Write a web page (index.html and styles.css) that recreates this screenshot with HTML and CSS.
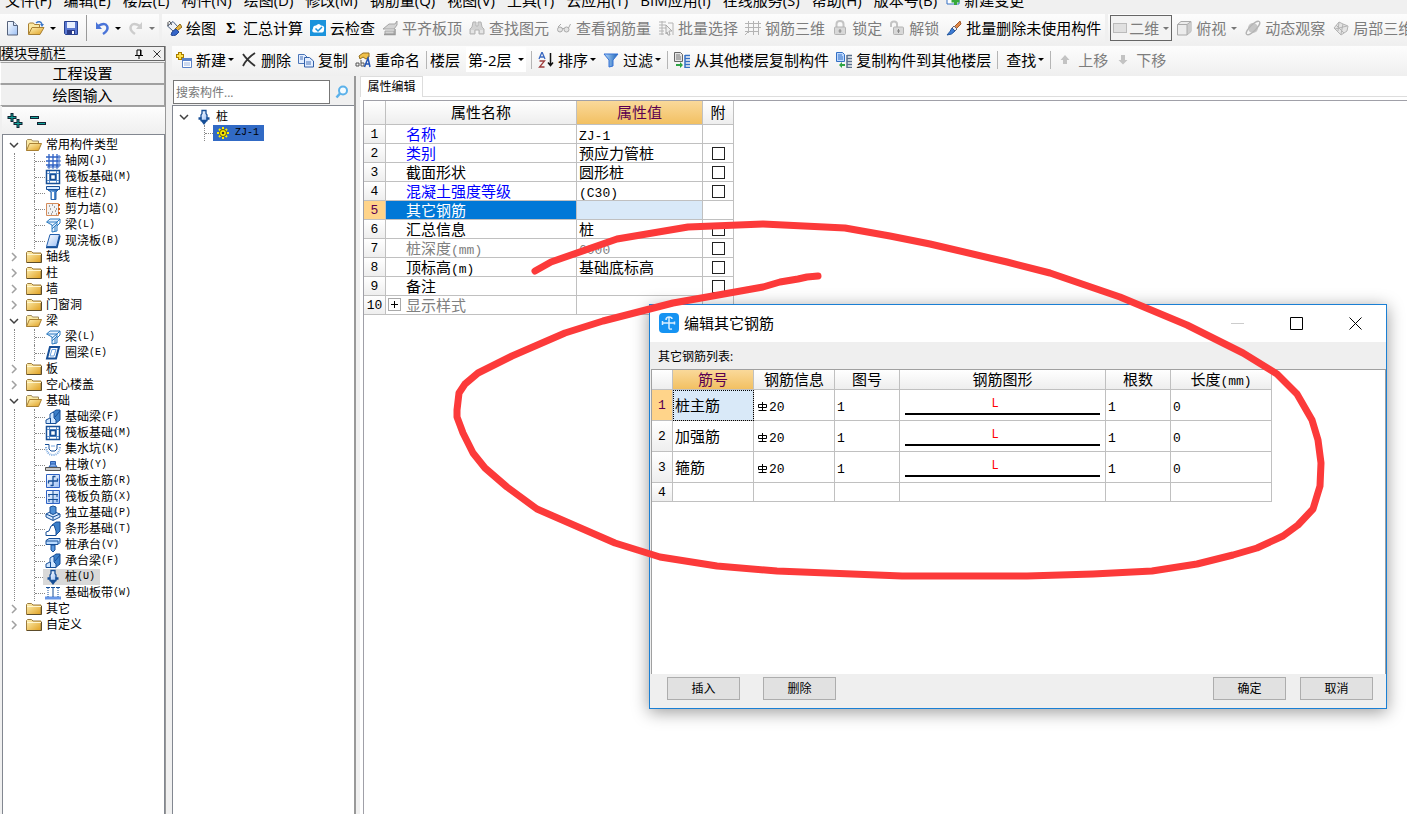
FILE: index.html
```html
<!DOCTYPE html>
<html lang="zh-CN">
<head>
<meta charset="utf-8">
<title>编辑其它钢筋</title>
<link rel="stylesheet" href="styles.css">
</head>
<body>
<svg class="defs" aria-hidden="true">
  <defs>
    <linearGradient id="gold" x1="0" y1="0" x2="1" y2="1"><stop offset="0" stop-color="#fff3b8"/><stop offset="1" stop-color="#e0a020"/></linearGradient>
    <linearGradient id="sky" x1="0" y1="0" x2="1" y2="1"><stop offset="0" stop-color="#fff"/><stop offset="1" stop-color="#9cc0f5"/></linearGradient>
    <linearGradient id="blue" x1="0" y1="0" x2="1" y2="0"><stop offset="0" stop-color="#b8dcff"/><stop offset="1" stop-color="#1b62b5"/></linearGradient>
  </defs>
  <symbol id="open" viewBox="0 0 16 16"><path d="M.5 13.500V3.500l1-1h4l1 1.500h6v2.500" fill="#fbe9a4" stroke="#a08a5c"/><path d="M.5 13.500 3.500 6.500h12l-3 7z" fill="url(#gold)" stroke="#a98032"/></symbol>
  <symbol id="folder" viewBox="0 0 16 16"><path d="M.5 13.500v-10l1-1h4l1.500 1.500h8v9.500z" fill="url(#gold)" stroke="#9b7a3c"/><path d="M1 5.500h14" stroke="#fff6cf"/><path d="M1 13.500h14.500v-8.500" fill="none" stroke="#5c4c2a"/></symbol>
  <symbol id="axis" viewBox="0 0 16 16"><path d="M4 1v13M8 1v13M12 1v13M1 4h12M1 8h12M1 12h12" stroke="#2f62c4" stroke-width="1.300"/><path d="M13 3h2v2h-2zM13 7h2v2h-2zM13 11h2v2h-2zM3 13h2v2H3zM7 13h2v2H7zM11 13h2v2h-2z" fill="none" stroke="#2f62c4"/></symbol>
  <symbol id="raft" viewBox="0 0 16 16"><path d="M1.500 1.500h13v13h-13z" fill="#fff" stroke="#174f97" stroke-width="1.500"/><path d="M4.500 2v12M11.500 2v12M2 4.500h12M2 11.500h12" stroke="#5b8ecb"/><path d="M5.500 5.500h5v5h-5z" fill="#fff" stroke="#174f97" stroke-width="1.500"/></symbol>
  <symbol id="column" viewBox="0 0 16 16"><path d="M1.500 1.500h13v3h-13z" fill="#d7e9ff" stroke="#174f97"/><path d="M3 5h10l-2 2v7.500H6V7z" fill="url(#blue)" stroke="#2361ac"/><path d="M7 7h2v7H7z" fill="#fff"/></symbol>
  <symbol id="wall" viewBox="0 0 16 16"><path d="M1.500 2.500h12v12h-12z" fill="#f3f3f3" stroke="#d48b5a"/><path d="M3 12h1M5 8h1M7 11h1M9 6h1M10 10h1M6 13h1M11 13h1M4 5h1M7 4h1M11 8h1" stroke="#555"/><path d="M13 4h2M13 8h2M13 12h2" stroke="#cc5d18" stroke-width="2"/></symbol>
  <symbol id="beam" viewBox="0 0 16 16"><path d="M1.500 5 5 2h10l-3 3v9l-5 1V8z" fill="#e6f2ff" stroke="#2d7bc0"/><path d="M2 5h10l3-3v4l-3 3M7 9l5-4M7 12l5-5M10 14v-5" fill="none" stroke="#2d7bc0"/></symbol>
  <symbol id="slab" viewBox="0 0 16 16"><path d="M1.500 13.500 5 1.500h9.500l-3 12z" fill="url(#sky)" stroke="#2460ad"/><path d="M1 14.500h11l3-12" fill="none" stroke="#174f97" stroke-width="1.500"/></symbol>
  <symbol id="ring" viewBox="0 0 16 16"><path d="M2 13.500 5 2h9l-3 11.500z" fill="#fff" stroke="#174f97" stroke-width="2"/><path d="M5 11 7 4.500h4L9 11z" fill="#fff" stroke="#6aa0e0"/></symbol>
  <symbol id="fbeam" viewBox="0 0 16 16"><path d="M7 4 11 1h4v10l-5 4z" fill="#3b7fc9" stroke="#174f97"/><path d="M1 14.500V11l4-2V5l3-2 1 1v5l2 2v3.500z" fill="#cfe6ff" stroke="#174f97"/><path d="M5.500 9v5M10 8l5-6" stroke="#174f97"/></symbol>
  <symbol id="pit" viewBox="0 0 16 16"><path d="M0 3.500h4V8l2 2h4l2-2V3.500h4" fill="none" stroke="#174f97"/><path d="M1 6q1 8 7 8t7-8" fill="none" stroke="#78a8e0" stroke-width="2" stroke-dasharray="1 1"/><path d="M6 5h4" stroke="#78a8e0"/></symbol>
  <symbol id="pier" viewBox="0 0 16 16"><path d="M5.500 4.500h5v3h-5z" fill="#5f95e2" stroke="#2c5fae"/><path d="M4 10l2-3h4l2 3z" fill="#86b2ee" stroke="#2c5fae"/><path d="M.5 10.500h15v3H.5z" fill="#c9c9c9" stroke="#555"/></symbol>
  <symbol id="mainbar" viewBox="0 0 16 16"><path d="M1.500 1.500h13v13h-13z" fill="url(#sky)" stroke="#2f62c4"/><path d="M8 3v10M8 3.500h2.500M5.500 12.500H8M3 8h10M3.500 8v2.500M12.500 5.500V8" stroke="#174f97" stroke-width="1.300"/></symbol>
  <symbol id="negbar" viewBox="0 0 16 16"><path d="M1.500 1.500h13v13h-13z" fill="url(#sky)" stroke="#2f62c4"/><path d="M8 2v12M3 5.500h10M3 10.500h10M4 5v3M12 5v3M4 10v3M12 10v3" stroke="#174f97"/></symbol>
  <symbol id="isolated" viewBox="0 0 16 16"><path d="M1 9l6-3 8 3v3l-7 3.500L1 12z" fill="#d9ebff" stroke="#174f97"/><path d="M1 9l7 3 7-3M8 12v3" fill="none" stroke="#174f97"/><path d="M5 8V2l3-1 3 1v6L8 9.500z" fill="#4f8fd4" stroke="#174f97"/></symbol>
  <symbol id="strip" viewBox="0 0 16 16"><path d="M7 4l4-3h4v9l-4 4z" fill="#3b7fc9" stroke="#174f97"/><path d="M1 14.500V11l3-1 2-5 3-1 2 6v4.500z" fill="#fff" stroke="#174f97"/></symbol>
  <symbol id="cap" viewBox="0 0 16 16"><path d="M1 3.500 4 1.500h11v4l-2 2H1z" fill="#bcdcff" stroke="#174f97"/><path d="M1 4h12v3" fill="none" stroke="#174f97"/><path d="M6 8h4v5l-2 2-2-2z" fill="#5f9be0" stroke="#174f97"/></symbol>
  <symbol id="pile" viewBox="0 0 16 16"><path d="M6 1.500h4v3l1 1.500v5.500H5V6l1-1.500z" fill="url(#sky)" stroke="#174f97" stroke-width="1.300"/><path d="M2.500 9.500h3M10.500 9.500h3" stroke="#174f97" stroke-width="2.500"/><path d="M5 12h6l-3 4z" fill="#174f97"/></symbol>
  <symbol id="band" viewBox="0 0 16 16"><path d="M0 13h16" stroke="#6797e8" stroke-width="3"/><path d="M1 2.500h4M6 2.500h4M11 2.500h4M8 2.500V12" stroke="#174f97"/><path d="M3 3v9M13 3v9" stroke="#174f97" stroke-dasharray="1 1"/></symbol>
  <symbol id="gear" viewBox="0 0 16 16"><path d="M8 2v12M2 8h12M4 4l8 8M12 4l-8 8" stroke="#ffee00" stroke-width="2"/><circle cx="8" cy="8" r="3.500" fill="#ffee00" stroke="#5f5a00"/><circle cx="8" cy="8" r="1.300" fill="#333"/></symbol>
  <symbol id="new" viewBox="0 0 16 16"><path d="M3.500 1.500h6l4 4v9.500h-10z" fill="url(#sky)" stroke="#56637c"/><path d="M9.500 1.500v4h4" fill="#dce8fa" stroke="#56637c"/></symbol>
  <symbol id="openfile" viewBox="0 0 18 16"><path d="M1.500 14V4l1-1h4l1 1.500h5V7" fill="#fbe9a4" stroke="#a98032"/><path d="M1.500 14.500 5 7.500h12l-4 7z" fill="url(#gold)" stroke="#a98032"/><path d="M9 3q4-3 6 1" fill="none" stroke="#3c77c8" stroke-width="1.500"/><path d="M13 4h4l-2 3z" fill="#3c77c8"/></symbol>
  <symbol id="save" viewBox="0 0 16 16"><path d="M1.500 1.500h13v13h-12l-1-1z" fill="#5a78d2" stroke="#27418f"/><path d="M4 2h8v6H4z" fill="#e8f0ff"/><path d="M4 10h8v4H4z" fill="#2c3c88"/><path d="M9 11h2v3H9z" fill="#fff"/></symbol>
  <symbol id="undo" viewBox="0 0 16 16"><path d="M4 6q7-4 9 0t-4 8" fill="none" stroke="#4a74d8" stroke-width="2.500"/><path d="M2 2v7h6z" fill="#4a74d8"/></symbol>
  <symbol id="redo" viewBox="0 0 16 16"><path d="M12 6Q5 2 3 6t4 8" fill="none" stroke="#cdcdcd" stroke-width="2.500"/><path d="M14 2v7H8z" fill="#cdcdcd"/></symbol>
  <symbol id="paint" viewBox="0 0 16 16"><path d="M1.500 6 7 1.500 12 7l-5 4z" fill="#eef1f6" stroke="#4a5f80"/><path d="M2 6V2.500q2-3 3.500 2.500" fill="none" stroke="#444"/><path d="M14 4l2 3-5 4-2-2z" fill="#e7b23c" stroke="#8a6a20"/><path d="M6 12l4-3 3 3-3 3q-3 1.500-5 0z" fill="#3565c8" stroke="#274a94"/></symbol>
  <symbol id="cloud" viewBox="0 0 16 16"><path d="M0 0h16v16H0z" fill="#1b93dc"/><path d="M4 12.500q-3-1-1-4 0-3 3-3 3-3 5 0 4 0 3 4 0 3-2 3z" fill="#fff"/><path d="M5.500 8.500 8 11l4-4" fill="none" stroke="#1b93dc" stroke-width="1.500"/></symbol>
  <symbol id="align" viewBox="0 0 16 16"><path d="M1 9l6-5h6l2-3v4l-3 4H6zM3 11h9v3H3z" fill="#d3d3d3" stroke="#a5a5a5"/><path d="M2 14.500h11V9" fill="none" stroke="#999" stroke-width="1.500"/></symbol>
  <symbol id="binoc" viewBox="0 0 16 16"><path d="M4 2h3v4h2V2h3l1 5 2 2v5h-5v-4H6v4H1V9l2-2z" fill="#d2d2d2" stroke="#b4b4b4"/><path d="M2 10h3v3H2zM11 10h3v3h-3z" fill="#e5e5e5"/></symbol>
  <symbol id="glasses" viewBox="0 0 16 16"><circle cx="4" cy="9.500" r="2.500" fill="#e4e4e4" stroke="#aaa"/><circle cx="10.500" cy="9.500" r="2.500" fill="#e4e4e4" stroke="#aaa"/><path d="M6 8.500h2M2 7l3-3M12.500 8l2-4" stroke="#aaa"/></symbol>
  <symbol id="select" viewBox="0 0 16 16"><path d="M1 2h7M1 5h7M1 8h7M1 11h5M1 14h5M10 3h5v12M4 1v14" fill="none" stroke="#b4b4b4"/><path d="M8 5l6 6h-3l1 4h-2l-1-3-1 2z" fill="#eee" stroke="#aaa"/></symbol>
  <symbol id="grid" viewBox="0 0 16 16"><path d="M3.500 1v12M8.500 1v14M13.500 1v14M0 3.500h16M0 7.500h16M0 11.500h14M0 15l4-4" stroke="#b4b4b4"/></symbol>
  <symbol id="lock" viewBox="0 0 16 16"><path d="M4.500 7V4q0-3 3.500-3t3.500 3v3" fill="none" stroke="#c4c4c4" stroke-width="2"/><rect x="2.500" y="7" width="11" height="7.500" rx="1" fill="#d8d8d8" stroke="#b4b4b4"/><path d="M8 9v4M6.500 11h3" stroke="#888"/></symbol>
  <symbol id="unlock" viewBox="0 0 16 16"><path d="M2 7V4q0-2.500 3-2.500T8 4v3" fill="none" stroke="#c4c4c4" stroke-width="2"/><rect x="4.500" y="7" width="10" height="7.500" rx="1" fill="#d8d8d8" stroke="#b4b4b4"/><path d="M9.500 9v4M8 11h3" stroke="#888"/></symbol>
  <symbol id="brush" viewBox="0 0 16 16"><path d="M14 1 8 7l2 2 5-5z" fill="#e08a4a" stroke="#a3592a"/><path d="M8 6l3 3-2 2-3-3z" fill="#e9edf5" stroke="#667"/><path d="M6 8l3 3q-3 4-8 4 3-3 5-7z" fill="#3d7cd6" stroke="#24589e"/></symbol>
  <symbol id="cube" viewBox="0 0 16 16"><path d="M1.500 4.500 5 1.500h10v10l-4 3.500H1.500z" fill="#ececec" stroke="#aaa"/><path d="M11 5l4-3v9l-4 4z" fill="#ccc"/><path d="M1.500 4.500H11V15M11 4.500l4-3" fill="none" stroke="#aaa"/></symbol>
  <symbol id="orbit" viewBox="0 0 16 16"><circle cx="8" cy="8" r="5" fill="#c6c6c6"/><ellipse cx="8" cy="8" rx="9" ry="3" transform="rotate(-45 8 8)" fill="none" stroke="#b4b4b4" stroke-width="1.300"/></symbol>
  <symbol id="local" viewBox="0 0 16 16"><path d="M1 8l5-6 4 2 5 2-1 5-6 4z" fill="#e4e4e4" stroke="#b4b4b4"/><path d="M3 5l8 8M6 2l-1 9M10 4 8 14M2 9l12-3" stroke="#b4b4b4"/></symbol>
  <symbol id="create" viewBox="0 0 16 16"><path d="M4 0v8M0 4h8" stroke="#a87c00" stroke-width="4"/><path d="M4 1v6M1 4h6" stroke="#ffe14a" stroke-width="2"/><path d="M6.500 6.500h9v9h-9z" fill="#fff" stroke="#5a82c8"/><path d="M6 7.500h10" stroke="#5a82c8" stroke-width="3"/><path d="M8 11h6M8 13h6" stroke="#9ab4e0"/></symbol>
  <symbol id="cross" viewBox="0 0 16 16"><path d="M2 2q4 6 12 12M14 1Q6 6 2 14" fill="none" stroke="#333" stroke-width="1.800"/></symbol>
  <symbol id="copy" viewBox="0 0 16 16"><path d="M.5 2.500h6l3 3v6h-9z" fill="#e3eeff" stroke="#4a75b8"/><path d="M6.500 5.500h5l4 3.500v6h-9z" fill="#e3eeff" stroke="#315fa8"/><path d="M2 5h3M2 7h3M8 10h5M8 12h5" stroke="#4a75b8"/></symbol>
  <symbol id="rename" viewBox="0 0 16 16"><path d="M4 4l4-3h6v4l-3 2-3-2-3 2z" fill="#f0c14a" stroke="#96701c"/><path d="M1 14v-3h3v3H1M6 8v6h3v-3H6" fill="none" stroke="#555"/><path d="M9.500 15 13 6l2 9M10.500 12h4" fill="none" stroke="#2455b4" stroke-width="1.500"/></symbol>
  <symbol id="sort" viewBox="0 0 16 16"><path d="M1 7 4 0l3 7M2 5h4" fill="none" stroke="#3968c0" stroke-width="1.300"/><path d="M1.500 9h5l-5 6h5" fill="none" stroke="#9c3c3c" stroke-width="1.300"/><path d="M12.500 1v12M10 10.500l2.500 3 2.500-3" fill="none" stroke="#111" stroke-width="1.500"/></symbol>
  <symbol id="filter" viewBox="0 0 16 16"><path d="M1 2h14l-5 6v6l-4 1V8z" fill="url(#blue)" stroke="#3470d4"/></symbol>
  <symbol id="from" viewBox="0 0 16 16"><path d="M.5.500h6l2 2v7h-8z" fill="#e5e5e5" stroke="#666"/><path d="M2 3h4M2 5h5M2 7h5" stroke="#777"/><path d="M11 3.500h5M11 6.500h5M11 9.500h5M11 12.500h5M11 15.500h5M11 3v13" stroke="#3470c4" stroke-width="1.500"/><path d="M2 12h4v-2l3 3-3 3v-2H2z" fill="#2da545"/></symbol>
  <symbol id="to" viewBox="0 0 16 16"><path d="M.5.500h6l2 2v7h-8z" fill="#bcd8ff" stroke="#3470c4"/><path d="M2 3h4M2 5h5M2 7h5" stroke="#3470c4"/><path d="M11 3.500h5M11 6.500h5M11 9.500h5M11 12.500h5M11 15.500h5M11 3v13" stroke="#5a6f8c" stroke-width="1.500"/><path d="M9 12H6v-2l-3 3 3 3v-2h3z" fill="#2da545"/></symbol>
  <symbol id="up" viewBox="0 0 10 10"><path d="M5 0l4.500 5H7v4H3V5H.5z" fill="#c3c3c3"/></symbol>
  <symbol id="down" viewBox="0 0 10 10"><path d="M5 9.500 9.500 5H7V0H3v5H.5z" fill="#c3c3c3"/></symbol>
  <symbol id="chevdown" viewBox="0 0 10 10"><path d="M1 3l4 4 4-4" fill="none" stroke="#404040" stroke-width="1.500"/></symbol>
  <symbol id="chevright" viewBox="0 0 10 10"><path d="M3 1l4 4-4 4" fill="none" stroke="#a0a0a0" stroke-width="1.500"/></symbol>
  <symbol id="rebar" viewBox="0 0 11 11"><path d="M5.500 1v9M1.500 9.500h8M1.500 3.500h8v3h-8z" fill="none" stroke="#000"/></symbol>
</svg>

<nav class="menubar">
  <a href="#">文件(F)</a><a href="#">编辑(E)</a><a href="#">楼层(L)</a><a href="#">构件(N)</a><a href="#">绘图(D)</a><a href="#">修改(M)</a><a href="#">钢筋量(Q)</a><a href="#">视图(V)</a><a href="#">工具(T)</a><a href="#">云应用(T)</a><a href="#">BIM应用(I)</a><a href="#">在线服务(S)</a><a href="#">帮助(H)</a><a href="#">版本号(B)</a>
  <a href="#" class="change"><svg class="i14" viewBox="0 0 14 14"><path d="M1 0h12v11H1z" fill="#fff" stroke="#3470c4"/><path d="M9.500 4v8M5.500 8h8" stroke="#37a93b" stroke-width="3"/></svg>新建变更</a>
</nav>

<div class="toprow">
  <div class="band quick">
    <button aria-label="新建文件"><svg><use href="#new"/></svg></button>
    <button aria-label="打开"><svg class="wide"><use href="#openfile"/></svg><i class="caret"></i></button>
    <button aria-label="保存"><svg><use href="#save"/></svg></button>
    <span class="sep"></span>
    <button aria-label="撤销"><svg><use href="#undo"/></svg><i class="caret"></i></button>
    <button aria-label="恢复" disabled><svg><use href="#redo"/></svg><i class="caret"></i></button>
  </div>
  <div class="band main">
    <button><svg><use href="#paint"/></svg>绘图</button>
    <button><span class="sigma">Σ</span>汇总计算</button>
    <button><svg><use href="#cloud"/></svg>云检查</button>
    <button disabled><svg><use href="#align"/></svg>平齐板顶</button>
    <button disabled><svg><use href="#binoc"/></svg>查找图元</button>
    <button disabled><svg><use href="#glasses"/></svg>查看钢筋量</button>
    <button disabled><svg><use href="#select"/></svg>批量选择</button>
    <button disabled><svg><use href="#grid"/></svg>钢筋三维</button>
    <button disabled><svg><use href="#lock"/></svg>锁定</button>
    <button disabled><svg><use href="#unlock"/></svg>解锁</button>
    <button><svg><use href="#brush"/></svg>批量删除未使用构件</button>
  </div>
  <div class="band view">
    <label class="dim"><span class="swatch"></span><select aria-label="视图维度"><option>二维</option></select><i class="caret"></i></label>
    <button disabled><svg><use href="#cube"/></svg>俯视<i class="caret"></i></button>
    <button disabled><svg><use href="#orbit"/></svg>动态观察</button>
    <button disabled><svg><use href="#local"/></svg>局部三维</button>
  </div>
</div>

<div class="workspace">
  <aside class="sidebar">
    <header class="navhead"><span>模块导航栏</span>
      <button aria-label="固定"><svg viewBox="0 0 10 10"><path d="M3 1h4v5M3 6V1M1 6.500h8M5 7v3" fill="none" stroke="#000"/><path d="M6.500 1v5" stroke="#000"/></svg></button>
      <button aria-label="关闭"><svg viewBox="0 0 10 10"><path d="M1.500 1.500l7 7M8.500 1.500l-7 7" stroke="#333"/></svg></button>
    </header>
    <button class="navbtn">工程设置</button>
    <button class="navbtn">绘图输入</button>
    <div class="navtools">
      <button aria-label="全部展开"><svg viewBox="0 0 16 16"><path d="M5 0v9M.5 4.500h9M11 6v9M6.500 10.500h9" stroke="#123" stroke-width="3"/><path d="M5 1v7M1.500 4.500h7M11 7v7M7.500 10.500h7" stroke="#12a59a"/></svg></button>
      <button aria-label="全部折叠"><svg viewBox="0 0 16 16"><path d="M0 4.500h9M7 10.500h9" stroke="#123" stroke-width="3"/><path d="M1 4.500h7M8 10.500h7" stroke="#12a59a"/></svg></button>
    </div>
    <ul class="tree">
      <li><div class="node"><svg class="chev"><use href="#chevdown"/></svg><svg><use href="#open"/></svg>常用构件类型</div>
        <ul>
          <li><svg><use href="#axis"/></svg>轴网<kbd>(J)</kbd></li>
          <li><svg><use href="#raft"/></svg>筏板基础<kbd>(M)</kbd></li>
          <li><svg><use href="#column"/></svg>框柱<kbd>(Z)</kbd></li>
          <li><svg><use href="#wall"/></svg>剪力墙<kbd>(Q)</kbd></li>
          <li><svg><use href="#beam"/></svg>梁<kbd>(L)</kbd></li>
          <li><svg><use href="#slab"/></svg>现浇板<kbd>(B)</kbd></li>
        </ul></li>
      <li><div class="node"><svg class="chev"><use href="#chevright"/></svg><svg><use href="#folder"/></svg>轴线</div></li>
      <li><div class="node"><svg class="chev"><use href="#chevright"/></svg><svg><use href="#folder"/></svg>柱</div></li>
      <li><div class="node"><svg class="chev"><use href="#chevright"/></svg><svg><use href="#folder"/></svg>墙</div></li>
      <li><div class="node"><svg class="chev"><use href="#chevright"/></svg><svg><use href="#folder"/></svg>门窗洞</div></li>
      <li><div class="node"><svg class="chev"><use href="#chevdown"/></svg><svg><use href="#open"/></svg>梁</div>
        <ul>
          <li><svg><use href="#beam"/></svg>梁<kbd>(L)</kbd></li>
          <li><svg><use href="#ring"/></svg>圈梁<kbd>(E)</kbd></li>
        </ul></li>
      <li><div class="node"><svg class="chev"><use href="#chevright"/></svg><svg><use href="#folder"/></svg>板</div></li>
      <li><div class="node"><svg class="chev"><use href="#chevright"/></svg><svg><use href="#folder"/></svg>空心楼盖</div></li>
      <li><div class="node"><svg class="chev"><use href="#chevdown"/></svg><svg><use href="#open"/></svg>基础</div>
        <ul>
          <li><svg><use href="#fbeam"/></svg>基础梁<kbd>(F)</kbd></li>
          <li><svg><use href="#raft"/></svg>筏板基础<kbd>(M)</kbd></li>
          <li><svg><use href="#pit"/></svg>集水坑<kbd>(K)</kbd></li>
          <li><svg><use href="#pier"/></svg>柱墩<kbd>(Y)</kbd></li>
          <li><svg><use href="#mainbar"/></svg>筏板主筋<kbd>(R)</kbd></li>
          <li><svg><use href="#negbar"/></svg>筏板负筋<kbd>(X)</kbd></li>
          <li><svg><use href="#isolated"/></svg>独立基础<kbd>(P)</kbd></li>
          <li><svg><use href="#strip"/></svg>条形基础<kbd>(T)</kbd></li>
          <li><svg><use href="#cap"/></svg>桩承台<kbd>(V)</kbd></li>
          <li><svg><use href="#fbeam"/></svg>承台梁<kbd>(F)</kbd></li>
          <li><span class="picked"><svg><use href="#pile"/></svg>桩<kbd>(U)</kbd></span></li>
          <li><svg><use href="#band"/></svg>基础板带<kbd>(W)</kbd></li>
        </ul></li>
      <li><div class="node"><svg class="chev"><use href="#chevright"/></svg><svg><use href="#folder"/></svg>其它</div></li>
      <li><div class="node"><svg class="chev"><use href="#chevright"/></svg><svg><use href="#folder"/></svg>自定义</div></li>
    </ul>
  </aside>

  <main class="content">
    <div class="band sub">
      <button><svg><use href="#create"/></svg>新建<i class="caret"></i></button>
      <button><svg><use href="#cross"/></svg>删除</button>
      <button><svg><use href="#copy"/></svg>复制</button>
      <button><svg><use href="#rename"/></svg>重命名</button>
      <span class="sep"></span>
      <label class="floor">楼层<span class="pick"><select><option>第-2层</option></select><i class="caret"></i></span></label>
      <span class="sep"></span>
      <button><svg><use href="#sort"/></svg>排序<i class="caret"></i></button>
      <button><svg><use href="#filter"/></svg>过滤<i class="caret"></i></button>
      <span class="sep"></span>
      <button><svg><use href="#from"/></svg>从其他楼层复制构件</button>
      <button><svg><use href="#to"/></svg>复制构件到其他楼层</button>
      <span class="sep roomy"></span>
      <button>查找<i class="caret"></i></button>
      <span class="sep"></span>
      <button disabled class="move"><svg class="arrow"><use href="#up"/></svg>上移</button>
      <button disabled class="move"><svg class="arrow"><use href="#down"/></svg>下移</button>
    </div>
    <div class="panels">
      <section class="parts">
        <div class="search"><input type="text" placeholder="搜索构件..." aria-label="搜索构件"><button aria-label="搜索"><svg viewBox="0 0 14 14"><circle cx="8" cy="5.500" r="4" fill="#f4fbff" stroke="#5bb1ea" stroke-width="2"/><path d="M5 8.500 1.500 12.500" stroke="#5bb1ea" stroke-width="2.500"/></svg></button></div>
        <ul class="tree small">
          <li><div class="node"><svg class="chev"><use href="#chevdown"/></svg><svg><use href="#pile"/></svg>桩</div>
            <ul><li><span class="chosen"><svg><use href="#gear"/></svg><kbd>ZJ-1</kbd></span></li></ul></li>
        </ul>
      </section>
      <section class="editor">
        <div class="tabs"><button class="tab">属性编辑</button></div>
        <div class="sheet">
          <table class="grid props">
            <colgroup><col class="c22"><col class="c191"><col class="c126"><col class="c31"></colgroup>
            <thead><tr><th></th><th>属性名称</th><th class="hot">属性值</th><th>附</th></tr></thead>
            <tbody>
              <tr><th>1</th><td class="key">名称</td><td><b>ZJ-1</b></td><td></td></tr>
              <tr><th>2</th><td class="key">类别</td><td>预应力管桩</td><td class="tick"><input type="checkbox" aria-label="附 类别"></td></tr>
              <tr><th>3</th><td>截面形状</td><td>圆形桩</td><td class="tick"><input type="checkbox" aria-label="附 截面形状"></td></tr>
              <tr><th>4</th><td class="key">混凝土强度等级</td><td><b>(C30)</b></td><td class="tick"><input type="checkbox" aria-label="附 混凝土强度等级"></td></tr>
              <tr class="current"><th class="on">5</th><td>其它钢筋</td><td></td><td></td></tr>
              <tr><th>6</th><td>汇总信息</td><td>桩</td><td class="tick"><input type="checkbox" aria-label="附 汇总信息"></td></tr>
              <tr class="dimmed"><th>7</th><td>桩深度<b>(mm)</b></td><td><b>6000</b></td><td class="tick"><input type="checkbox" aria-label="附 桩深度"></td></tr>
              <tr><th>8</th><td>顶标高<b>(m)</b></td><td>基础底标高</td><td class="tick"><input type="checkbox" aria-label="附 顶标高"></td></tr>
              <tr><th>9</th><td>备注</td><td></td><td class="tick"><input type="checkbox" aria-label="附 备注"></td></tr>
              <tr class="dimmed"><th>10</th><td class="group"><div><button aria-label="展开"><svg viewBox="0 0 11 11"><path d="M5.500 2v7M2 5.500h7" stroke="#000"/></svg></button>显示样式</div></td><td></td><td></td></tr>
            </tbody>
          </table>
        </div>
      </section>
    </div>
  </main>
</div>

<div class="dialog" role="dialog" aria-label="编辑其它钢筋">
  <header class="title">
    <svg class="logo" viewBox="0 0 20 20"><rect width="20" height="20" rx="4" fill="#1593f2"/><path d="M7 7q0-3 3-3t3 2M10 4v11q0 1.500 3 1M3 10h13M3.500 8v4M15.500 8.500v3" fill="none" stroke="#d9efff" stroke-width="1.500"/></svg>
    <span>编辑其它钢筋</span>
    <div class="winbtns">
      <button aria-label="最小化" disabled><svg viewBox="0 0 13 13"><path d="M0 6.500h13" stroke="#ccc"/></svg></button>
      <button aria-label="最大化"><svg viewBox="0 0 13 13"><path d="M.5.500h12v12H.5z" fill="none" stroke="#000"/></svg></button>
      <button aria-label="关闭"><svg viewBox="0 0 13 13"><path d="M.5.500l12 12M12.500.500l-12 12" stroke="#000"/></svg></button>
    </div>
  </header>
  <p class="caption">其它钢筋列表:</p>
  <div class="listing">
    <table class="grid bars">
      <colgroup><col class="c21"><col class="c81"><col class="c81"><col class="c65"><col class="c206"><col class="c65"><col class="c101"></colgroup>
      <thead><tr><th></th><th class="hot">筋号</th><th>钢筋信息</th><th>图号</th><th>钢筋图形</th><th>根数</th><th>长度<b>(mm)</b></th></tr></thead>
      <tbody>
        <tr><th class="on">1</th><td class="focus">桩主筋</td><td><svg class="rebar"><use href="#rebar"/></svg><b>20</b></td><td><b>1</b></td><td class="shape"><span>L</span></td><td><b>1</b></td><td><b>0</b></td></tr>
        <tr><th>2</th><td>加强筋</td><td><svg class="rebar"><use href="#rebar"/></svg><b>20</b></td><td><b>1</b></td><td class="shape"><span>L</span></td><td><b>1</b></td><td><b>0</b></td></tr>
        <tr><th>3</th><td>箍筋</td><td><svg class="rebar"><use href="#rebar"/></svg><b>20</b></td><td><b>1</b></td><td class="shape"><span>L</span></td><td><b>1</b></td><td><b>0</b></td></tr>
        <tr class="blank"><th>4</th><td></td><td></td><td></td><td></td><td></td><td></td></tr>
      </tbody>
    </table>
  </div>
  <footer class="actions"><button>插入</button><button>删除</button><span class="fill"></span><button>确定</button><button>取消</button></footer>
</div>

<svg class="markup" width="1407" height="814" viewBox="0 0 1407 814" aria-hidden="true"><polyline points="535,271 551,262 617,239 688,227 763,224 845,228 890,236 930,244 1007,262 1050,273 1120,297 1187,325 1243,353 1277,374 1297,394 1312,420 1318,440 1321,463 1320,486 1313,509 1298,525 1283,536 1257,548 1233,555 1197,564 1152,571 1093,574 1027,576 902,576 777,571 717,566 660,557 615,543 537,509 507,487 485,468 473,453 463,433 457,417 457,410 459,393 465,384 478,373 512,356 565,333 603,321 673,303 707,297 763,287 780,282 798,279 807,277 818,276"/></svg>
</body>
</html>
```
FILE: styles.css
```css
* { box-sizing: border-box; }
body {
  margin: 0;
  height: 100vh;
  display: flex;
  flex-direction: column;
  position: relative;
  overflow: hidden;
  background: #f0f0f0;
  color: #000;
  font: 15px/20px "Open Sans", "Noto Sans CJK SC", sans-serif;
}
button, select, input { font: inherit; color: inherit; }
button { background: none; border: 0; padding: 0; }
svg { display: block; flex: none; width: 16px; height: 16px; }
ul { list-style: none; margin: 0; padding: 0; }
.defs { position: absolute; width: 0; height: 0; }
kbd, b { font-family: "Liberation Mono", monospace; font-weight: 400; line-height: 0; }

/* menu and toolbars */
.menubar {
  height: 14px;
  flex: none;
  display: flex;
  align-items: flex-end;
  gap: 12px;
  padding: 0 5px 4px;
  overflow: hidden;
  white-space: nowrap;
}
.menubar a { color: #000; text-decoration: none; flex: none; }
.menubar .change { display: flex; align-items: center; gap: 4px; margin-left: -3px; }
.menubar .i14 { width: 14px; height: 14px; }
.toprow { flex: none; display: flex; gap: 3px; height: 31px; overflow: hidden; }
.band {
  display: flex;
  align-items: center;
  gap: 7px;
  flex: none;
  height: 31px;
  padding-bottom: 3px;
  white-space: nowrap;
  background: linear-gradient(#fdfdfd, #efefef);
}
.band button { display: flex; align-items: center; gap: 4px; }
.band button:disabled { color: #7d7d7d; }
.quick { width: 159px; padding-left: 4px; }
.quick .wide { width: 18px; }
.main { padding-left: 4px; padding-right: 4px; }
.view { flex: 1 0 auto; padding-left: 2px; gap: 4px; }
.view button { margin-right: 4px; }
.sigma { width: 16px; text-align: center; font: bold 15px/20px "Liberation Serif", serif; }
.caret { border: 3px solid transparent; border-top-color: #000; border-bottom: 0; margin-left: 1px; }
:disabled .caret, .dim .caret { border-top-color: #777; }
.sep { width: 1px; height: 18px; background: #b5b5b5; }
.quick .sep { height: 26px; background: #999; }
.dim { display: flex; align-items: center; width: 62px; height: 26px; border: 1px solid #666; background: #f3f3f3; color: #7d7d7d; padding-left: 2px; }
.swatch { width: 14px; height: 10px; border: 1px solid #bbb; background: #e0e0e0; }
select { appearance: none; border: 0; background: none; padding: 0; height: 20px; }
.dim select { width: 35px; padding-left: 2px; }
.sub { padding-left: 4px; height: 30px; }
.sub .caret { margin-left: -2px; }
.sub .sep { margin: 0 -1px; }
.sub .sep.roomy { margin-right: 1px; }
.floor { display: flex; align-items: center; gap: 6px; margin-left: -3px; margin-right: -1px; }
.pick { display: flex; align-items: center; width: 60px; height: 25px; background: #fff; padding-left: 2px; }
.pick select { width: 52px; }
.move { margin-left: 3px; }
.move .arrow { width: 10px; height: 10px; margin-right: 4px; }

/* module navigator */
.workspace { flex: 1; min-height: 0; display: flex; gap: 6px; padding-top: 1px; }
.sidebar { flex: none; width: 166px; display: flex; flex-direction: column; border-right: 1px solid #999; }
.navhead { display: flex; align-items: center; gap: 8px; height: 15px; border: 1px solid #666; font-size: 13px; line-height: 13px; padding-right: 2px; }
.navhead span { flex: 1; }
.navhead svg { width: 10px; height: 10px; }
.navbtn { height: 22px; line-height: 20px; border: 1px solid #a0a0a0; border-left-color: #fff; margin-top: 1px; }
.navbtn + .navbtn { margin-top: 0; }
.navtools { display: flex; gap: 7px; height: 28px; align-items: center; padding-left: 5px; margin-left: 2px; background: linear-gradient(#fdfdfd, #efefef); border-top: 1px solid #a0a0a0; }
.tree { background: #fff; font-size: 12px; line-height: 16px; }
.sidebar .tree { flex: 1; overflow: hidden; margin-left: 2px; border: 1px solid #828790; border-bottom: 0; padding-top: 2px; }
.tree kbd { font-size: 10px; }
.tree .node { display: flex; align-items: center; gap: 4px; height: 16px; padding-left: 6px; }
.tree .chev { width: 10px; height: 10px; margin-right: 3px; }
.tree li ul { margin-left: 11px; padding-left: 19px; border-left: 1px dotted #888; }
.tree li li { display: flex; align-items: center; height: 16px; border-left: 1px dotted #888; }
.tree li li::before { content: ""; width: 10px; border-top: 1px dotted #888; }
.tree li li svg { margin-right: 4px; }
.picked { display: flex; align-items: center; background: #d9d9d9; margin-left: -2px; padding: 0 5px 0 2px; }

/* component list */
.content { flex: 1; min-width: 0; display: flex; flex-direction: column; }
.panels { flex: 1; min-height: 0; display: flex; gap: 4px; }
.parts { flex: none; width: 184px; display: flex; flex-direction: column; border-right: 2px solid #999; padding-top: 4px; }
.search { display: flex; align-items: center; height: 26px; border-bottom: 1px solid #828790; padding-bottom: 1px; gap: 5px; }
.search input { width: 157px; height: 24px; margin-left: 1px; border: 1px solid #777; background: #fff; font-size: 12px; padding: 0 2px; }
.search input::placeholder { color: #777; }
.search svg { width: 14px; height: 14px; }
.tree.small { flex: 1; border-left: 1px solid #828790; padding-top: 3px; }
.small li ul { border-left-color: transparent; }
.chosen { display: flex; align-items: center; background: #316ac5; margin-left: -2px; padding: 0 5px 0 2px; }

/* property editor */
.editor { flex: 1; min-width: 0; display: flex; flex-direction: column; background: #fff; }
.tabs { display: flex; height: 21px; border-bottom: 1px solid #ddd; margin-bottom: 3px; }
.tab { height: 21px; width: 63px; font-size: 12px; line-height: 18px; background: #fff; border: 1px solid #ddd; border-bottom: 0; }
.sheet { flex: 1; margin-left: 3px; border: 1px solid #a0a0a8; border-right: 0; border-bottom: 0; }
.grid { table-layout: fixed; width: 0; border-collapse: separate; border-spacing: 0; font-size: 15px; line-height: 16px; font-family: "Noto Sans CJK SC", sans-serif; white-space: nowrap; }
.grid th, .grid td { border: 0 solid #c0c0c0; border-width: 0 1px 1px 0; padding: 0 2px 1px; height: 19px; font-weight: 400; text-align: left; overflow: hidden; }
.grid th { text-align: center; padding: 0 0 1px; background: linear-gradient(#fff, #eee); }
.grid tbody th { font-family: "Liberation Mono", monospace; font-size: 13px; padding: 1px 0 0; }
.grid b { font-size: 13px; }
.grid th.hot { background: linear-gradient(#fad99a, #f2c062); color: #5a0050; }
.grid th.on { background: #ffd48a; color: #5a0050; }
.c21 { width: 21px; } .c22 { width: 22px; } .c31 { width: 31px; } .c65 { width: 65px; } .c81 { width: 81px; }
.c101 { width: 101px; } .c126 { width: 126px; } .c191 { width: 191px; } .c206 { width: 206px; }
.props thead th { height: 24px; }
.props td:nth-child(2) { padding-left: 20px; }
.props td.key { color: #00f; }
.props .dimmed td { color: #808080; }
.props .current td:nth-child(2) { background: #0078d7; color: #fff; }
.props .current td:nth-child(3) { background: #d9e9f8; }
.props td.tick { padding: 0; }
.tick input { appearance: none; display: block; width: 13px; height: 13px; margin: 1px auto 0; border: 1px solid #222; background: #fff; }
.props td.group { padding-left: 2px; }
.group div { display: flex; align-items: center; gap: 5px; }
.group button { width: 13px; height: 13px; border: 1px solid #aaa; }
.group svg { width: 11px; height: 11px; }

/* floating dialog */
.dialog { position: absolute; left: 649px; top: 304px; width: 738px; height: 405px; display: flex; flex-direction: column; border: 1px solid #1a7fd4; background: #efefef; box-shadow: 0 3px 16px rgba(0, 0, 0, .4); }
.title { display: flex; align-items: center; gap: 5px; height: 37px; padding: 0 0 1px 9px; background: #fff; font-family: "Noto Sans CJK SC", sans-serif; }
.logo { width: 20px; height: 20px; }
.winbtns { display: flex; gap: 46px; margin-left: auto; padding-right: 24px; }
.winbtns svg { width: 13px; height: 13px; }
.caption { margin: 0; height: 27px; padding: 5px 8px; font-size: 12px; }
.listing { flex: 1; background: #fff; border: 1px solid #a0a0a0; border-bottom: 0; margin-left: 1px; }
.bars tbody tr:not(.blank) > * { height: 31px; }
.bars thead th { height: 20px; }
.bars td.focus { background: #d9e9f8; outline: 1px dotted #000; outline-offset: -1px; }
.rebar { display: inline-block; vertical-align: middle; width: 11px; height: 11px; margin: 0 1px; }
.bars td.shape { padding: 0 5px; }
.shape span { display: block; height: 20px; border-bottom: 2px solid #000; text-align: center; color: #f00; font: 12px/18px "Liberation Mono", monospace; padding-right: 15px; }
.actions { display: flex; align-items: flex-start; height: 34px; padding: 3px 13px 0 17px; font-size: 12px; }
.actions button { width: 73px; height: 23px; line-height: 20px; background: #e1e1e1; border: 1px solid #adadad; }
.actions button + button { margin-left: 23px; }
.actions .fill { flex: 1; }
.actions .fill ~ button + button { margin-left: 14px; }

/* freehand annotation */
.markup { position: absolute; left: 0; top: 0; width: 1407px; height: 814px; pointer-events: none; }
.markup polyline { fill: none; stroke: #fc3a3a; stroke-width: 7; stroke-linecap: round; stroke-linejoin: round; }
```
